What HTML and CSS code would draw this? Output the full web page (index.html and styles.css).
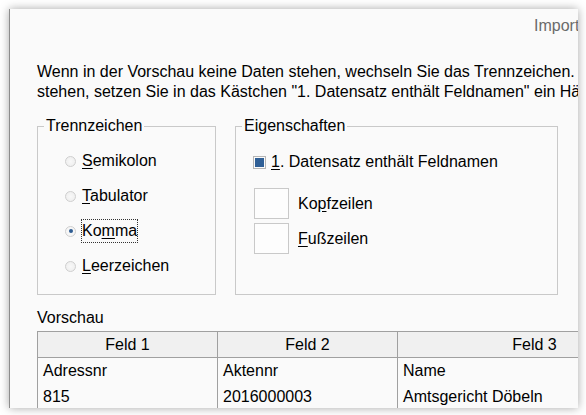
FILE: index.html
```html
<!DOCTYPE html>
<html lang="de">
<head>
<meta charset="utf-8">
<title>Import</title>
<link rel="stylesheet" href="styles.css">
</head>
<body>
<div class="window">
  <div class="title">Import</div>
  <p class="intro">Wenn in der Vorschau keine Daten stehen, wechseln Sie das Trennzeichen. Wenn in der ersten Zeile Feldnamen<br>stehen, setzen Sie in das Kästchen "1. Datensatz enthält Feldnamen" ein Häkchen.</p>
  <div class="groups">
    <fieldset class="group sep">
      <legend>Trennzeichen</legend>
      <div class="radio"><span class="dot"></span><span class="lbl"><u>S</u>emikolon</span></div>
      <div class="radio"><span class="dot"></span><span class="lbl"><u>T</u>abulator</span></div>
      <div class="radio"><span class="dot on"></span><span class="lbl focus">Ko<u>m</u>ma</span></div>
      <div class="radio"><span class="dot"></span><span class="lbl"><u>L</u>eerzeichen</span></div>
    </fieldset>
    <fieldset class="group props">
      <legend>Eigenschaften</legend>
      <div class="check"><span class="box"></span><span class="lbl"><u>1</u>. Datensatz enthält Feldnamen</span></div>
      <div class="field first"><span class="input"></span><span class="lbl">Ko<u>p</u>fzeilen</span></div>
      <div class="field"><span class="input"></span><span class="lbl"><u>F</u>ußzeilen</span></div>
    </fieldset>
  </div>
  <div class="preview-label">Vorschau</div>
  <div class="grid">
    <div class="row head">
      <div class="cell">Feld 1</div>
      <div class="cell">Feld 2</div>
      <div class="cell wide">Feld 3</div>
    </div>
    <div class="row">
      <div class="cell">Adressnr</div>
      <div class="cell">Aktennr</div>
      <div class="cell wide">Name</div>
    </div>
    <div class="row">
      <div class="cell">815</div>
      <div class="cell">2016000003</div>
      <div class="cell wide">Amtsgericht Döbeln</div>
    </div>
  </div>
</div>
</body>
</html>
```

FILE: styles.css
```css
html, body {
  margin: 0;
  padding: 0;
  background: #ffffff;
}
body {
  font-family: "Liberation Sans", Arial, sans-serif;
  font-size: 16px;
  line-height: 20px;
  color: #000;
  padding: 9px 0 0 9px;
  height: 415px;
  box-sizing: border-box;
  overflow: hidden;
}
.window {
  width: 569px;
  height: 399px;
  box-sizing: border-box;
  background: #fafafa;
  border-left: 1px solid #8c8c8c;
  box-shadow: 0 0 9px rgba(0, 0, 0, 0.35);
  overflow: hidden;
  display: flex;
  flex-direction: column;
}
.title {
  padding: 7px 0 0 524px;
  height: 20px;
  color: #6a6a6a;
  white-space: nowrap;
}
.intro {
  margin: 26px 0 0 27px;
  white-space: nowrap;
}
.groups {
  display: flex;
  gap: 19px;
  margin: 14px 0 0 27px;
}
.group {
  margin: 0;
  min-width: 0;
  border: 1px solid #c9c9c9;
  box-sizing: border-box;
}
.group legend {
  padding: 0 2px;
  margin: 0;
  line-height: 20px;
}
.sep {
  width: 179px;
  padding: 15px 0 18px 6px;
}
.props {
  width: 323px;
  padding: 16px 0 0 6px;
}
.radio {
  display: flex;
  align-items: center;
  height: 20px;
  margin: 0 0 15px 21px;
}
.radio:last-child {
  margin-bottom: 0;
}
.dot {
  width: 11px;
  height: 11px;
  box-sizing: border-box;
  border: 1px solid #cfcfcf;
  border-radius: 50%;
  background: radial-gradient(circle, #f8f8f8 0%, #ececec 100%);
  margin-right: 5px;
  position: relative;
  flex: none;
}
.dot.on {
  background: #f6f6f6;
}
.dot.on::after {
  content: "";
  position: absolute;
  left: 2.5px;
  top: 2.5px;
  width: 4px;
  height: 4px;
  border-radius: 50%;
  background: #2e5c92;
}
.lbl {
  border: 1px dotted transparent;
  padding: 1px 0;
  white-space: nowrap;
}
.lbl.focus {
  border-color: #333;
}
u {
  text-decoration: underline;
  text-underline-offset: 2px;
}
.check {
  display: flex;
  align-items: center;
  height: 20px;
  margin-left: 11px;
}
.box {
  width: 13px;
  height: 13px;
  box-sizing: border-box;
  border: 1px solid #b5b5b5;
  padding: 1px;
  background: #2f5f96;
  background-clip: content-box;
  margin-right: 5px;
  flex: none;
}
.check .lbl {
  border: 0;
  padding: 0;
}
.field {
  display: flex;
  align-items: center;
  margin: 4px 0 0 12px;
}
.field.first {
  margin-top: 16px;
}
.input {
  width: 35px;
  height: 31px;
  box-sizing: border-box;
  border: 1px solid #c9c9c9;
  background: #fdfdfd;
  margin-right: 9px;
  flex: none;
}
.field .lbl {
  border: 0;
  padding: 0;
}
.preview-label {
  margin: 13px 0 0 27px;
}
.grid {
  margin: 3px 0 0 27px;
  border-top: 1px solid #a0a0a0;
  border-left: 1px solid #a0a0a0;
  width: 700px;
}
.row {
  display: flex;
  height: 26px;
}
.row.head {
  height: 25px;
  background: #f0f0f0;
  border-bottom: 1px solid #a0a0a0;
}
.cell {
  width: 180px;
  box-sizing: border-box;
  border-right: 1px solid #a0a0a0;
  padding: 0 5px;
  display: flex;
  align-items: center;
  white-space: nowrap;
  flex: none;
}
.head .cell {
  justify-content: center;
}
.cell.wide {
  width: 274px;
}
```
